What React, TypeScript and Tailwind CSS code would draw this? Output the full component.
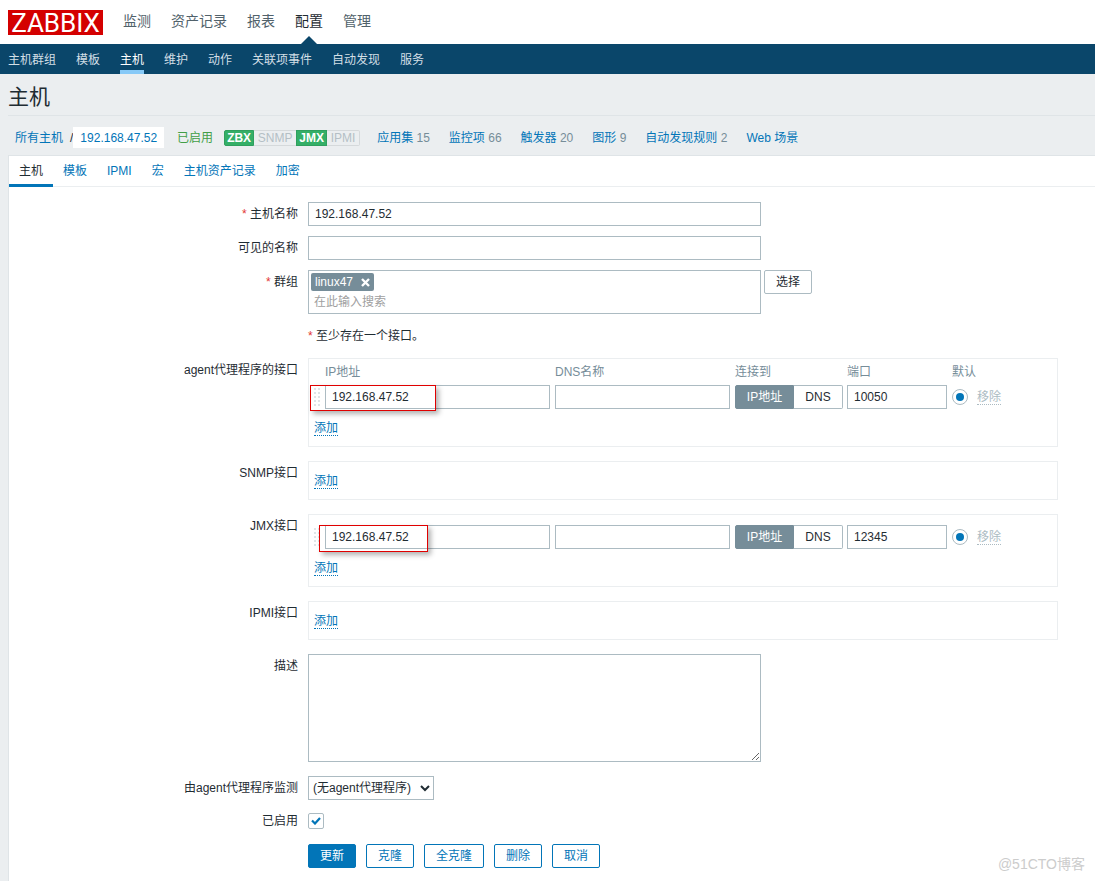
import React, { useState } from "react";
import clsx from "clsx";

const MAIN_MENU = ["监测", "资产记录", "报表", "配置", "管理"];
const SUB_MENU = ["主机群组", "模板", "主机", "维护", "动作", "关联项事件", "自动发现", "服务"];
const TABS = ["主机", "模板", "IPMI", "宏", "主机资产记录", "加密"];

const HOST_LINKS = [
  { label: "应用集", count: 15 },
  { label: "监控项", count: 66 },
  { label: "触发器", count: 20 },
  { label: "图形", count: 9 },
  { label: "自动发现规则", count: 2 },
  { label: "Web 场景" }
];

const inputClass = "block h-6 w-full border border-[#acbbc2] bg-white px-[6px] leading-4 outline-none focus:border-[#0275b8]";
const outlineButton = "h-6 rounded-[2px] border border-[#0275b8] bg-white px-[11px] text-[#0275b8] cursor-pointer hover:bg-[#e0f0fa]";

interface FormRowProps {
  label?: string;
  htmlFor?: string;
  required?: boolean;
  className?: string;
  children: React.ReactNode;
}

function FormRow({ label, htmlFor, required, className, children }: FormRowProps) {
  return (
    <div className={clsx("flex items-start gap-[10px]", className)}>
      <div className="w-[289px] shrink-0 text-right leading-6">
        {label && (
          <label htmlFor={htmlFor}>
            {required && <span className="text-[#e33734]">* </span>}
            {label}
          </label>
        )}
      </div>
      <div className="min-w-0 flex-1 pr-[37px]">{children}</div>
    </div>
  );
}

function DottedButton({ muted, children }: { muted?: boolean; children: React.ReactNode }) {
  return (
    <button
      type="button"
      disabled={muted}
      className={clsx(
        "block border-b border-dotted leading-[14px]",
        muted ? "border-[#acbbc2] text-[#acbbc2]" : "border-[#0275b8] text-[#0275b8] cursor-pointer"
      )}
    >
      {children}
    </button>
  );
}

function DragHandle() {
  return (
    <svg width="6" height="18" viewBox="0 0 6 18" fill="#dfe4e7" className="block">
      {[0, 4, 8, 12, 16].map(y => (
        <g key={y}>
          <rect x="0" y={y} width="2" height="2" />
          <rect x="4" y={y} width="2" height="2" />
        </g>
      ))}
    </svg>
  );
}

interface InterfaceTableProps {
  name: string;
  port: string;
  showHeader?: boolean;
  highlight: string;
}

function InterfaceTable({ name, port, showHeader, highlight }: InterfaceTableProps) {
  const [connect, setConnect] = useState("ip");

  return (
    <div className={clsx("relative", showHeader ? "pt-[5px]" : "pt-[10px]")}>
      <table className="w-[740px] max-w-full table-fixed text-left">
        <colgroup>
          <col className="w-[11px]" />
          <col className="w-[230px]" />
          <col className="w-[180px]" />
          <col className="w-[112px]" />
          <col className="w-[105px]" />
          <col className="w-[25px]" />
          <col />
        </colgroup>
        {showHeader && (
          <thead>
            <tr className="h-[21px] align-top leading-4 text-[#768d99]">
              <th />
              <th className="font-normal">IP地址</th>
              <th className="font-normal">DNS名称</th>
              <th className="font-normal">连接到</th>
              <th className="font-normal">端口</th>
              <th className="font-normal whitespace-nowrap" colSpan={2}>默认</th>
            </tr>
          </thead>
        )}
        <tbody>
          <tr className="h-6">
            <td><DragHandle /></td>
            <td className="pr-[5px]">
              <input aria-label="IP地址" className={inputClass} defaultValue="192.168.47.52" />
            </td>
            <td className="pr-[5px]">
              <input aria-label="DNS名称" className={inputClass} />
            </td>
            <td>
              <div className="flex w-[108px]">
                {[{ key: "ip", text: "IP地址" }, { key: "dns", text: "DNS" }].map(o => (
                  <label
                    key={o.key}
                    className={clsx(
                      "h-6 border text-center leading-[22px] cursor-pointer",
                      o.key === "ip" ? "w-[59px] rounded-l-[2px]" : "w-[49px] rounded-r-[2px] border-l-0",
                      connect === o.key ? "border-[#768d99] bg-[#768d99] text-white" : "border-[#acbbc2] bg-white"
                    )}
                  >
                    <input
                      type="radio"
                      name={`${name}-connect`}
                      className="sr-only"
                      checked={connect === o.key}
                      onChange={() => setConnect(o.key)}
                    />
                    {o.text}
                  </label>
                ))}
              </div>
            </td>
            <td className="pr-[5px]">
              <input aria-label="端口" className={inputClass} defaultValue={port} />
            </td>
            <td>
              <input
                type="radio"
                name={`${name}-default`}
                aria-label="默认"
                defaultChecked
                className="flex size-4 appearance-none items-center justify-center rounded-full border border-[#acbbc2] bg-white checked:before:size-2 checked:before:rounded-full checked:before:bg-[#0275b8] checked:before:content-['']"
              />
            </td>
            <td><DottedButton muted>移除</DottedButton></td>
          </tr>
        </tbody>
      </table>
      {/* Marker around the address */}
      <div className={clsx("pointer-events-none absolute border border-[#e00000] shadow-[3px_3px_5px_rgba(0,0,0,0.3)]", highlight)} />
    </div>
  );
}

function InterfaceBox({ children }: { children?: React.ReactNode }) {
  return (
    <div className="max-w-[750px] border border-[#ebeef0] px-[5px] pb-[10px]">
      {children}
      <div className="h-[27px] pt-3">
        <DottedButton>添加</DottedButton>
      </div>
    </div>
  );
}

function Header() {
  return (
    <header>
      <div className="flex h-11 items-center bg-white px-2">
        <a href="#" className="h-[25px] w-[95px] bg-[#d40000] text-center font-['Roboto',sans-serif] text-[26px] leading-[26px] text-white">ZABBIX</a>
        <nav className="ml-5 flex h-full gap-5 text-sm leading-[42px] text-[#51626b]">
          {MAIN_MENU.map(item => (
            <a key={item} href="#" className={clsx("relative", item === "配置" && "text-[#1f2c33]")}>
              {item}
              {item === "配置" && (
                <svg width="16" height="8" viewBox="0 0 16 8" className="absolute bottom-0 left-[6px]">
                  <path d="M0 8 8 0l8 8z" fill="#0a466a" />
                </svg>
              )}
            </a>
          ))}
        </nav>
      </div>
      <nav className="flex h-[30px] gap-5 bg-[#0a466a] px-2 leading-8 text-[#d3dfe6]">
        {SUB_MENU.map(item => (
          <a key={item} href="#" className={clsx(item === "主机" && "border-b-4 border-[#87c9f7] text-white")}>
            {item}
          </a>
        ))}
      </nav>
    </header>
  );
}

function HostBar() {
  return (
    <div className="flex items-start pt-[11px] pb-[5px] pl-[7px] leading-[23px] text-[#0275b8]">
      <a href="#">所有主机</a>
      <span className="ml-[7px] text-[#1f2c33]">/</span>
      <a href="#" className="h-[21px] bg-white px-[7px]">192.168.47.52</a>
      <span className="ml-[13px] text-[#429e47]">已启用</span>
      <div className="mt-[3px] ml-[11px] flex text-center leading-[14px] font-bold">
        <span className="w-[30px] rounded-l-[2px] border border-[#2f9f5e] bg-[#34af67] text-white">ZBX</span>
        <span className="w-[42px] border border-x-0 border-[#d5d9db] font-normal text-[#b4bfc5]">SNMP</span>
        <span className="w-[31px] border border-[#2f9f5e] bg-[#34af67] text-white">JMX</span>
        <span className="w-[33px] rounded-r-[2px] border border-l-0 border-[#d5d9db] font-normal text-[#b4bfc5]">IPMI</span>
      </div>
      <div className="ml-[17px] flex gap-[19px]">
        {HOST_LINKS.map(link => (
          <span key={link.label} className="whitespace-nowrap">
            <a href="#">{link.label}</a>
            {link.count && <span className="text-[#768d99]"> {link.count}</span>}
          </span>
        ))}
      </div>
    </div>
  );
}

export default function App() {
  const [tab, setTab] = useState("主机");
  const [enabled, setEnabled] = useState(true);

  return (
    <div className="relative flex min-h-screen flex-col bg-[#ebeef0] font-['Liberation_Sans','Noto_Sans_CJK_SC',sans-serif] text-xs text-[#1f2c33]">
      <Header />

      <main className="flex flex-1 flex-col pl-2">
        <h1 className="h-[42px] border-b border-[#dfe4e7] text-[21px] leading-[46px]">主机</h1>
        <HostBar />

        <div className="flex-1 border-t border-l border-[#dfe4e7] bg-white">
          {/* Tabs */}
          <div className="flex h-[31px] border-b border-[#ebeef0]" role="tablist">
            {TABS.map(t => (
              <button
                key={t}
                type="button"
                role="tab"
                aria-selected={tab === t}
                onClick={() => setTab(t)}
                className={clsx(
                  "h-[31px] border-b-[3px] px-[10px] pt-[2px] leading-[26px] cursor-pointer",
                  tab === t ? "border-[#0275b8]" : "border-transparent text-[#0275b8]"
                )}
              >
                {t}
              </button>
            ))}
          </div>

          <form className="pt-[15px] pb-3" onSubmit={e => e.preventDefault()}>
            <div className="flex flex-col gap-[10px]">
              <FormRow label="主机名称" htmlFor="host" required>
                <div className="max-w-[453px]">
                  <input id="host" className={inputClass} defaultValue="192.168.47.52" />
                </div>
              </FormRow>
              <FormRow label="可见的名称" htmlFor="visible-name">
                <div className="max-w-[453px]">
                  <input id="visible-name" className={inputClass} />
                </div>
              </FormRow>
              <FormRow label="群组" htmlFor="groups" required>
                <div className="flex items-start gap-[3px]">
                  <div className="h-11 w-full max-w-[453px] border border-[#acbbc2] p-[2px]">
                    <span className="flex h-[18px] w-[63px] items-center justify-between rounded-[2px] bg-[#768d99] px-1 text-white">
                      linux47
                      <button type="button" aria-label="移除 linux47" className="cursor-pointer">
                        <svg width="9" height="9" viewBox="0 0 9 9" className="block">
                          <path d="M1 1l7 7M8 1L1 8" stroke="#fff" strokeWidth="2.4" />
                        </svg>
                      </button>
                    </span>
                    <input
                      id="groups"
                      placeholder="在此输入搜索"
                      className="block h-5 w-full px-[3px] pt-[2px] leading-4 outline-none placeholder:text-[#a0a0a0]"
                    />
                  </div>
                  <button type="button" className="h-6 shrink-0 rounded-[2px] border border-[#acbbc2] bg-white px-[11px] cursor-pointer">
                    选择
                  </button>
                </div>
              </FormRow>
              <FormRow>
                <p className="leading-6"><span className="text-[#e33734]">* </span>至少存在一个接口。</p>
              </FormRow>
            </div>

            {/* Interfaces */}
            <div className="mt-[10px] flex flex-col gap-[14px]">
              <FormRow label="agent代理程序的接口">
                <InterfaceBox>
                  <InterfaceTable name="agent" port="10050" showHeader highlight="top-[26px] -left-1 h-[26px] w-[126px]" />
                </InterfaceBox>
              </FormRow>
              <FormRow label="SNMP接口">
                <InterfaceBox />
              </FormRow>
              <FormRow label="JMX接口">
                <InterfaceBox>
                  <InterfaceTable name="jmx" port="12345" highlight="top-[10px] left-[5px] h-[27px] w-[109px]" />
                </InterfaceBox>
              </FormRow>
              <FormRow label="IPMI接口">
                <InterfaceBox />
              </FormRow>
              <FormRow label="描述" htmlFor="description">
                <textarea id="description" className="block h-[108px] w-full max-w-[453px] border border-[#acbbc2] px-[6px] py-1 outline-none" />
              </FormRow>
              <FormRow label="由agent代理程序监测" htmlFor="proxy">
                <select id="proxy" className="block h-6 w-[126px] border border-[#acbbc2] bg-white">
                  <option>(无agent代理程序)</option>
                </select>
              </FormRow>
            </div>

            <FormRow label="已启用" htmlFor="enabled" className="mt-[9px]">
              <div className="relative flex h-6 items-center">
                <input
                  id="enabled"
                  type="checkbox"
                  checked={enabled}
                  onChange={e => setEnabled(e.target.checked)}
                  className="size-4 appearance-none rounded-[2px] border border-[#acbbc2] bg-white"
                />
                {enabled && (
                  <svg width="10" height="8" viewBox="0 0 10 8" className="pointer-events-none absolute left-[3px]">
                    <path d="M1 3.5l3 3L9 1" fill="none" stroke="#0275b8" strokeWidth="2.2" />
                  </svg>
                )}
              </div>
            </FormRow>

            <FormRow className="mt-[11px]">
              <div className="flex gap-[10px]">
                <button type="submit" className="h-6 rounded-[2px] border border-[#0275b8] bg-[#0275b8] px-[11px] text-white cursor-pointer">
                  更新
                </button>
                {["克隆", "全克隆", "删除", "取消"].map(text => (
                  <button key={text} type="button" className={outlineButton}>{text}</button>
                ))}
              </div>
            </FormRow>
          </form>
        </div>
      </main>

      <span className="pointer-events-none absolute right-[10px] bottom-[6px] text-sm leading-[22px] text-[#cccccc]">@51CTO博客</span>
    </div>
  );
}
